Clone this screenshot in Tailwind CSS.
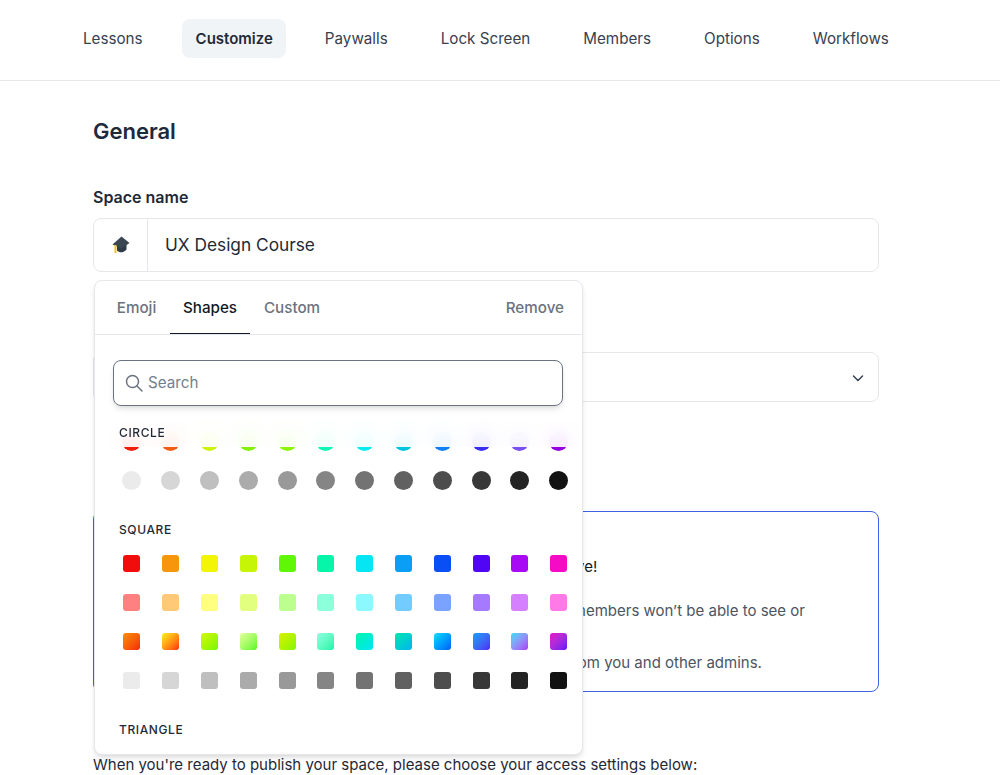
<!DOCTYPE html>
<html>
<head>
<meta charset="utf-8">
<script src="https://cdn.jsdelivr.net/npm/@tailwindcss/browser@4"></script>
</head>
<body class="bg-white font-['Inter',sans-serif] text-[#1f2937] overflow-hidden">
<div class="relative h-[775px] w-[1000px] overflow-hidden">
  <nav class="flex h-[81px] items-center gap-[25px] border-b border-[#e5e7eb] pb-[3px] pl-[69px] text-[15.200px] leading-[23px] text-[#374151]">
    <a class="rounded-lg px-3.5 py-2">Lessons</a>
    <a class="rounded-lg bg-[#f1f4f7] py-2 pr-[13px] pl-3.5 text-[15px] font-semibold text-[#1f2937]">Customize</a>
    <a class="rounded-lg px-3.5 py-2">Paywalls</a>
    <a class="rounded-lg px-3.5 py-2">Lock Screen</a>
    <a class="rounded-lg px-3.5 py-2">Members</a>
    <a class="rounded-lg px-3.5 py-2">Options</a>
    <a class="rounded-lg px-3.5 py-2">Workflows</a>
  </nav>
  <main class="ml-[93px] w-[786px]">
    <h2 class="mt-[36px] text-[22px] leading-[28px] font-semibold text-[#1e293b]">General</h2>
    <label class="mt-[40px] block text-[16px] leading-6 font-semibold text-[#1f2937]">Space name</label>
    <div class="mt-[9px] flex h-[54px] items-stretch rounded-lg border border-[#e5e7eb]">
      <div class="flex w-[54px] items-center justify-center border-r border-[#e5e7eb]">
        <svg class="h-[18px] w-[18px]" viewBox="0 0 18 18"><path fill="#2f3b46" d="M5 9.500 14.500 9v4.500C12 16.800 7.500 17.300 5 14.500z"/><path fill="#3a4752" d="M9.500 .5 17.500 7 9.500 12.500 .5 8.500z"/><path fill="#fbbf24" d="M2.500 9h2v8h-2z"/></svg>
      </div>
      <div class="flex flex-1 items-center pl-[17px] text-[17.300px] text-[#1f2937]">UX Design Course</div>
    </div>
    <div class="mt-[80px] flex h-[50px] items-center justify-end rounded-lg border border-[#e5e7eb] pt-[1px] pr-[12px]">
      <svg class="h-4 w-4 text-[#374151]" viewBox="0 0 16 16" fill="none" stroke="currentColor" stroke-width="1.500" stroke-linecap="round" stroke-linejoin="round"><path d="m3.500 6 4.500 4.500 4.500-4.500"/></svg>
    </div>
    <div class="mt-[109px] h-[181px] rounded-lg border border-[#3f63e0] pt-[42px] pl-[24px] text-[15px] leading-[26px] text-[#4b5563]">
      <p class="-ml-[2px] text-[#111827] whitespace-nowrap">Your space is currently in draft mode and so it has not yet gone live!</p>
      <p class="mt-[18px] w-[702px] pl-[2px]">While your space is still in draft mode, your own customers and members won’t be able to see or access any of its content.</p>
      <p class="pl-[6px] whitespace-nowrap">You can only preview what the space looks like with feedback from you and other admins.</p>
    </div>
    <p class="mt-[61px] text-[15px] leading-6 text-[#1f2937]">When you're ready to publish your space, please choose your access settings below:</p>
  </main>

  <div class="absolute top-[280px] left-[94px] flex h-[475px] w-[489px] flex-col overflow-hidden rounded-lg border border-[#e5e7eb] bg-white shadow-md">
    <div class="flex h-[54px] shrink-0 items-stretch border-b border-[#e5e7eb] pl-[8px] text-[15.200px] font-medium text-[#6b7280]">
      <span class="flex w-[67px] items-center justify-center border-b border-transparent pt-[3px]">Emoji</span>
      <span class="flex w-[80px] items-center justify-center border-b border-[#111827] pt-[3px] text-[#111827]">Shapes</span>
      <span class="flex w-[84px] items-center justify-center border-b border-transparent pt-[3px]">Custom</span>
      <span class="mr-[18px] ml-auto flex items-center border-b border-transparent pt-[3px]">Remove</span>
    </div>
    <div class="relative flex-1 overflow-hidden">
      <div class="mt-[25px] mr-[19px] ml-[18px] flex h-[46px] items-center gap-[5px] rounded-lg border border-[#6b7280] pl-[11px] text-[15.200px] text-[#737f91] shadow-md">
        <svg class="h-[18px] w-[18px] text-[#6b7280]" viewBox="0 0 18 18" fill="none" stroke="currentColor" stroke-width="1.500" stroke-linecap="round"><circle cx="7.500" cy="7.500" r="6"/><path d="m12 12 5 5"/></svg>
        <span>Search</span>
      </div>

      <div class="relative mt-[13px] h-[82px]">
        <div class="absolute inset-x-0 top-0 z-10 flex h-[28px] items-center bg-white/90 pl-[24px] text-xs font-medium tracking-[0.6px] text-[#1f2937] backdrop-blur-[10px]">CIRCLE</div>
        <div class="grid grid-cols-[repeat(12,38.800px)] gap-y-[20px] pt-[13px] pl-[17.500px] [&>i]:mx-auto [&>i]:block [&>i]:size-[19px] [&>i]:rounded-full">
          <i class="bg-[#f21c0d]"></i><i class="bg-[#f25c12]"></i><i class="bg-[#cdf20d]"></i><i class="bg-[#86f00d]"></i><i class="bg-[#8cf50a]"></i><i class="bg-[#0df5b4]"></i><i class="bg-[#05ebf0]"></i><i class="bg-[#00c4e0]"></i><i class="bg-[#0f80f5]"></i><i class="bg-[#3a2ff0]"></i><i class="bg-[#7a50f0]"></i><i class="bg-[#9400e0]"></i>
          <i class="bg-[#ebebeb]"></i><i class="bg-[#d6d6d6]"></i><i class="bg-[#bfbfbf]"></i><i class="bg-[#ababab]"></i><i class="bg-[#999999]"></i><i class="bg-[#858585]"></i><i class="bg-[#737373]"></i><i class="bg-[#616161]"></i><i class="bg-[#4d4d4d]"></i><i class="bg-[#383838]"></i><i class="bg-[#242424]"></i><i class="bg-[#121212]"></i>
        </div>
      </div>

      <div class="mt-[15px] flex h-[28px] items-center pl-[24px] text-xs font-medium tracking-[0.6px] text-[#1f2937]">SQUARE</div>
      <div class="mt-[11px] grid grid-cols-[repeat(12,38.800px)] gap-y-[22px] pl-[17.500px] [&>i]:mx-auto [&>i]:block [&>i]:size-[17px] [&>i]:rounded-[3px]">
        <i class="bg-[#f20d0d]"></i><i class="bg-[#f7960a]"></i><i class="bg-[#f2f505]"></i><i class="bg-[#c6f505]"></i><i class="bg-[#5ff705]"></i><i class="bg-[#05f5a9]"></i><i class="bg-[#05e6f5]"></i><i class="bg-[#0a9ef5]"></i><i class="bg-[#0a4ff5]"></i><i class="bg-[#5005f5]"></i><i class="bg-[#a90af5]"></i><i class="bg-[#f50ac6]"></i>
        <i class="bg-[#ff8080]"></i><i class="bg-[#ffc978]"></i><i class="bg-[#ffff80]"></i><i class="bg-[#e3ff80]"></i><i class="bg-[#bcff8f]"></i><i class="bg-[#8cffdb]"></i><i class="bg-[#8cf9ff]"></i><i class="bg-[#73ccff]"></i><i class="bg-[#7aa3ff]"></i><i class="bg-[#a57aff]"></i><i class="bg-[#d580ff]"></i><i class="bg-[#ff7ae6]"></i>
        <i class="bg-linear-to-br from-[#f78c05] to-[#f51f0a]"></i><i class="bg-linear-to-br from-[#fff01f] to-[#f5220a]"></i><i class="bg-linear-to-br from-[#d4f70a] to-[#70f705]"></i><i class="bg-linear-to-br from-[#e3ff99] to-[#4ff705]"></i><i class="bg-linear-to-br from-[#d9f000] to-[#7ff705]"></i><i class="bg-linear-to-br from-[#8affdf] to-[#05f5a9]"></i><i class="bg-linear-to-br from-[#05f5a9] to-[#05e6f5]"></i><i class="bg-linear-to-br from-[#05e6a9] to-[#05b4f0]"></i><i class="bg-linear-to-br from-[#26dcff] to-[#0a5cf5]"></i><i class="bg-linear-to-br from-[#0f9ef5] to-[#4a23f5]"></i><i class="bg-linear-to-br from-[#05dcf5] to-[#a82ff5]"></i><i class="bg-linear-to-br from-[#eb05c2] to-[#6a05f5]"></i>
        <i class="bg-[#ebebeb]"></i><i class="bg-[#d6d6d6]"></i><i class="bg-[#bfbfbf]"></i><i class="bg-[#ababab]"></i><i class="bg-[#999999]"></i><i class="bg-[#858585]"></i><i class="bg-[#737373]"></i><i class="bg-[#616161]"></i><i class="bg-[#4d4d4d]"></i><i class="bg-[#383838]"></i><i class="bg-[#242424]"></i><i class="bg-[#121212]"></i>
      </div>
      <div class="mt-[27px] flex h-[28px] items-center pl-[24px] text-xs font-medium tracking-[0.6px] text-[#1f2937]">TRIANGLE</div>
    </div>
  </div>
</div>
</body>
</html>
